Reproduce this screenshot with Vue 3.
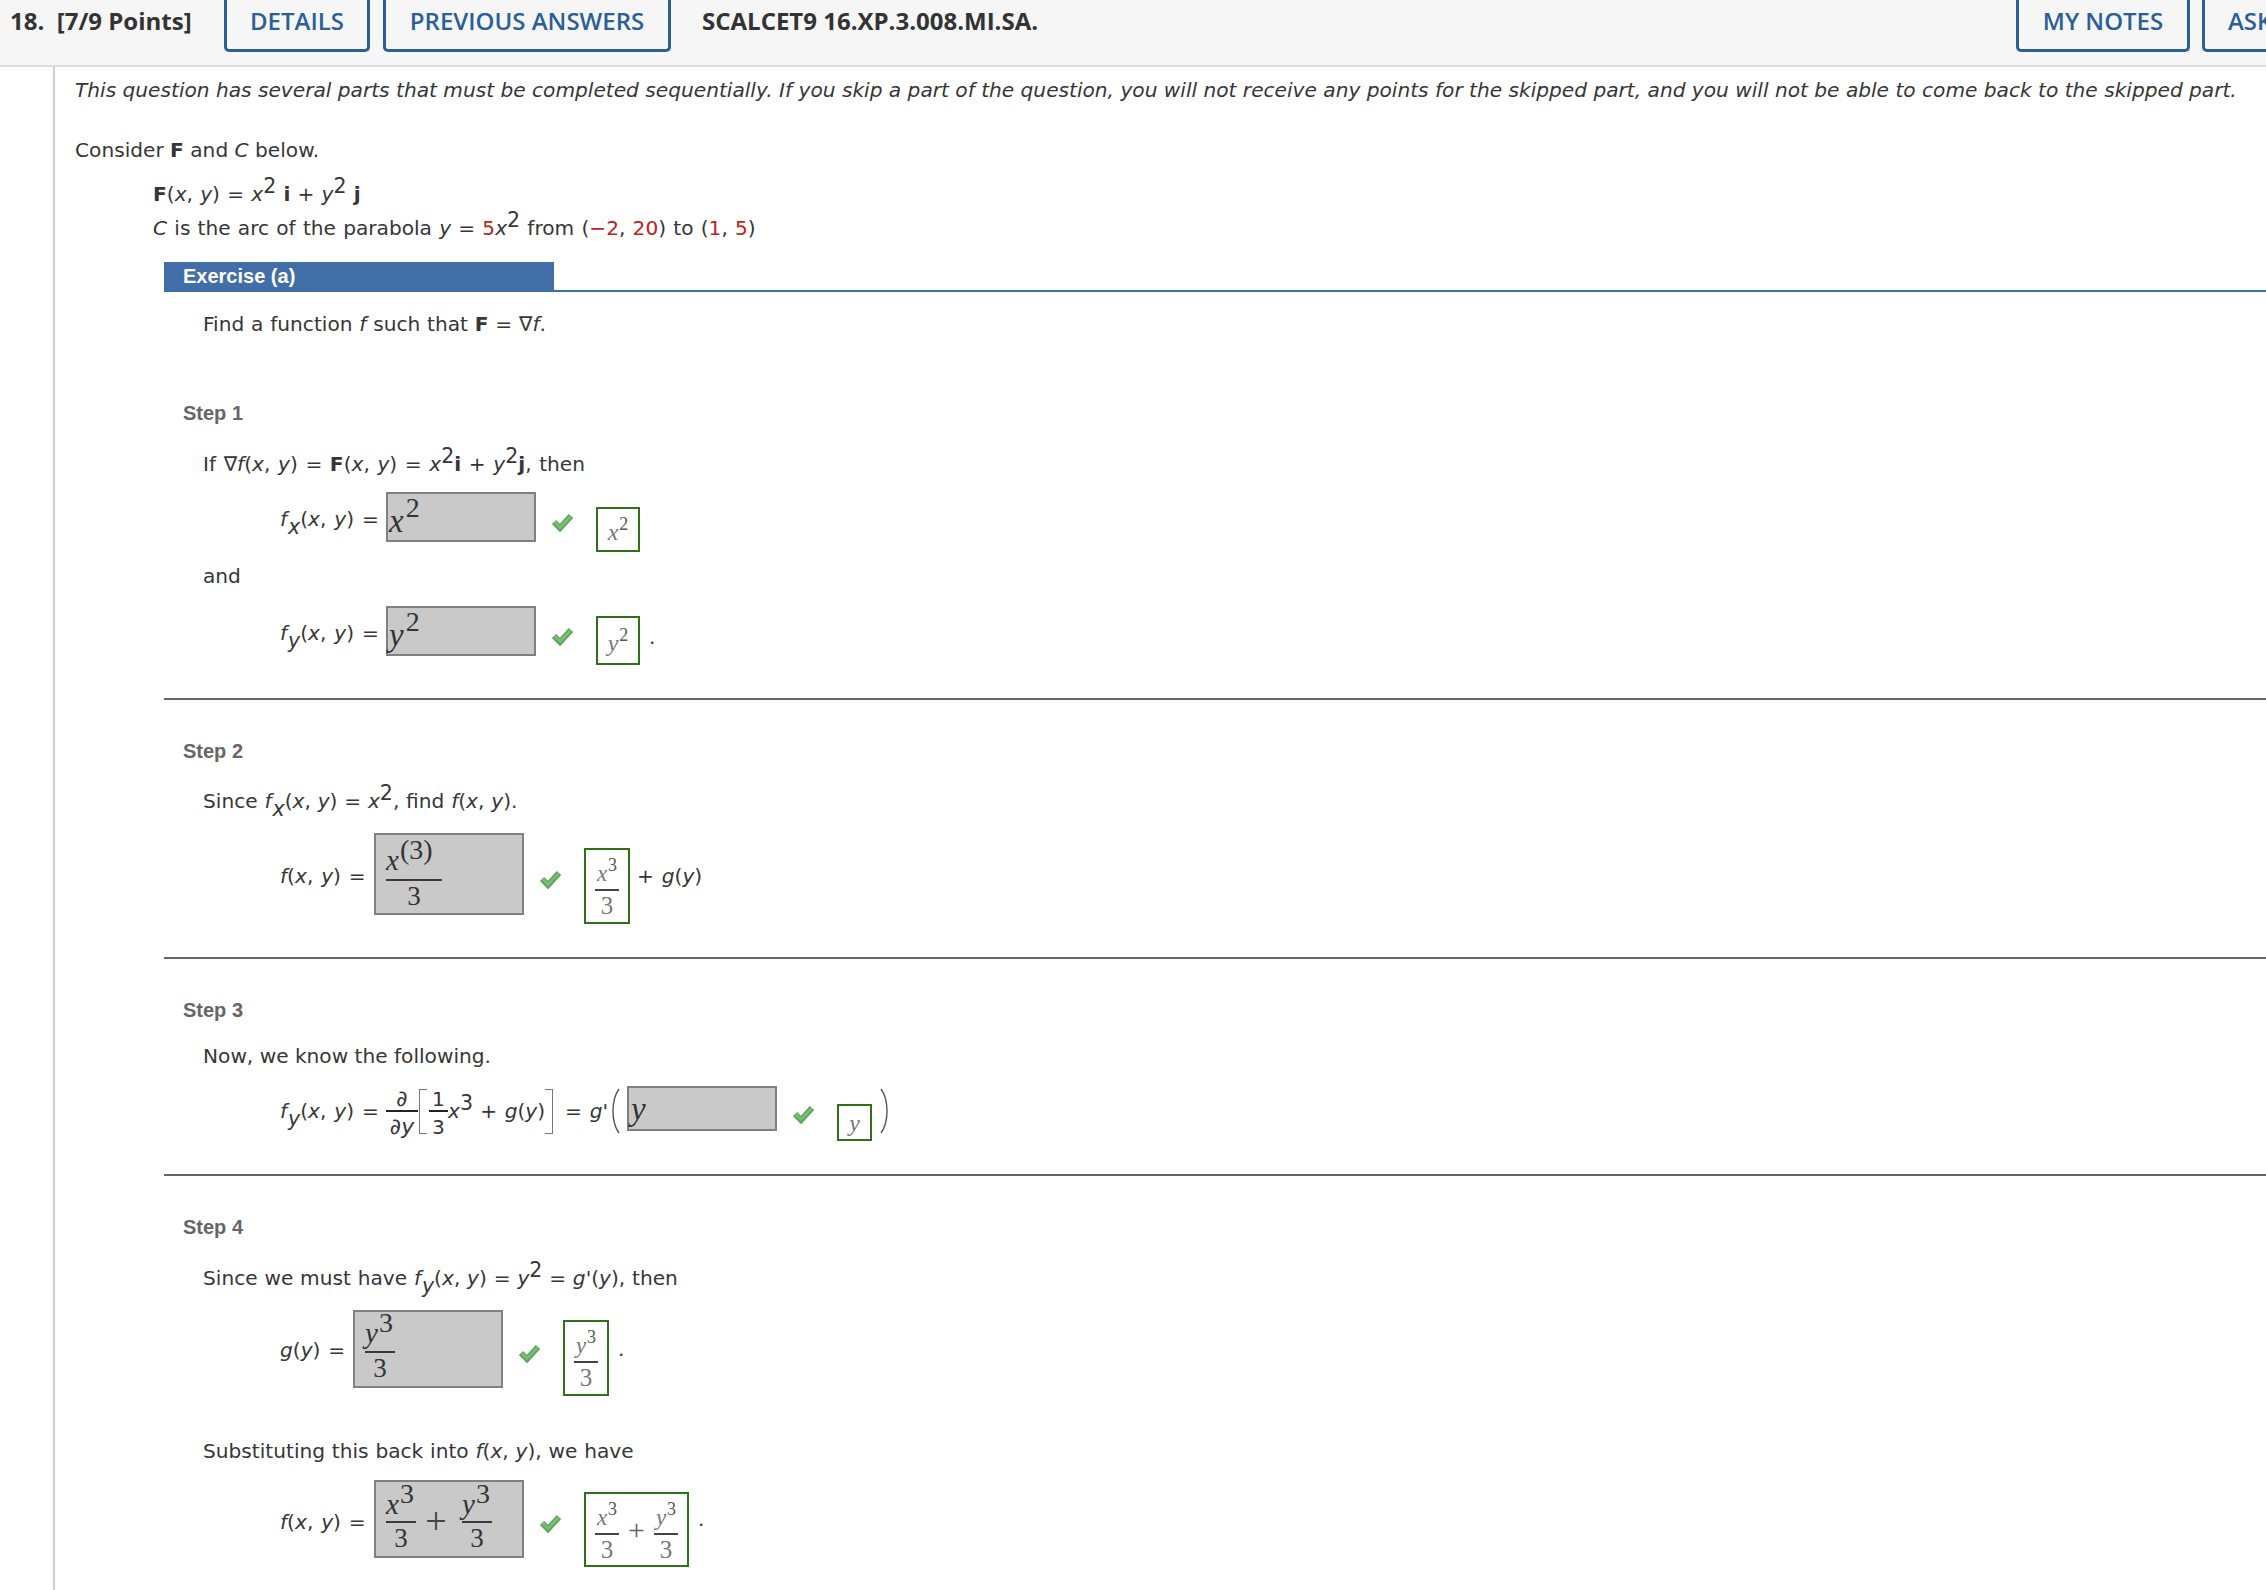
<script setup>
</script>

<template>
  <div class="page">
    <header class="top">
      <div class="points">18.&nbsp; [7/9 Points]</div>
      <a class="tab t-details">DETAILS</a>
      <a class="tab t-prev">PREVIOUS ANSWERS</a>
      <div class="code">SCALCET9 16.XP.3.008.MI.SA.</div>
      <a class="tab t-notes">MY NOTES</a>
      <a class="tab t-ask">ASK YOUR TEACHER</a>
    </header>

    <main class="body">
      <p class="line intro">This question has several parts that must be completed sequentially. If you skip a part of the question, you will not receive any points for the skipped part, and you will not be able to come back to the skipped part.</p>
      <p class="line consider">Consider <b>F</b> and <i>C</i> below.</p>
      <div class="defs">
        <p class="line def1 msd"><b>F</b>(<i>x</i>, <i>y</i>) = <i>x</i><span class="sup">2</span> <b>i</b> + <i>y</i><span class="sup">2</span> <b>j</b></p>
        <p class="line def2 msd"><i>C</i> is the arc of the parabola <i>y</i> = <span class="red">5</span><i>x</i><span class="sup">2</span> from (<span class="red">−2</span>, <span class="red">20</span>) to (<span class="red">1</span>, <span class="red">5</span>)</p>
      </div>

      <div class="exercise"><div class="ex-tag">Exercise (a)</div></div>

      <section class="part">
        <p class="line txt find ms">Find a function <i>f</i> such that <b>F</b> = ∇<i>f</i>.</p>

        <h3 class="step st1">Step 1</h3>
        <p class="line txt if1 msw">If ∇<i>f</i>(<i>x</i>, <i>y</i>) = <b>F</b>(<i>x</i>, <i>y</i>) = <i>x</i><span class="sup">2</span><b>i</b> + <i>y</i><span class="sup">2</span><b>j</b>, then</p>
        <div class="row r1">
          <div class="lab l106"><i>f</i><span class="sub">x</span>(<i>x</i>, <i>y</i>) =</div>
          <div class="box b150"><span class="m"><i>x</i><span class="bsup">2</span></span></div>
          <svg class="chk" viewBox="0 0 23 20"><path class="c1" d="M3 10l6 6L20 4" /><path class="c2" d="M3.6 10l5.4 5.4L19.4 4.6" /></svg>
          <div class="ans w44"><span class="am"><i>x</i><span class="as">2</span></span></div>
        </div>
        <p class="line txt and">and</p>
        <div class="row r2">
          <div class="lab l106"><i>f</i><span class="sub">y</span>(<i>x</i>, <i>y</i>) =</div>
          <div class="box b150"><span class="m"><i>y</i><span class="bsup">2</span></span></div>
          <svg class="chk" viewBox="0 0 23 20"><path class="c1" d="M3 10l6 6L20 4" /><path class="c2" d="M3.6 10l5.4 5.4L19.4 4.6" /></svg>
          <div class="ans w44"><span class="am"><i>y</i><span class="as">2</span></span></div>
          <div class="dot">.</div>
        </div>
        <div class="rule rule1"></div>

        <h3 class="step st2">Step 2</h3>
        <p class="line txt after-step ms">Since <i>f</i><span class="sub">x</span>(<i>x</i>, <i>y</i>) = <i>x</i><span class="sup">2</span>, find <i>f</i>(<i>x</i>, <i>y</i>).</p>
        <div class="row r3">
          <div class="lab l94"><i>f</i>(<i>x</i>, <i>y</i>) =</div>
          <div class="box b150 pad10">
            <div class="fr fr-box">
              <div class="n n2"><i>x</i><span class="fsup">(3)</span></div>
              <div class="d">3</div>
            </div>
          </div>
          <svg class="chk" viewBox="0 0 23 20"><path class="c1" d="M3 10l6 6L20 4" /><path class="c2" d="M3.6 10l5.4 5.4L19.4 4.6" /></svg>
          <div class="ans w46">
            <div class="fr fr-ans">
              <div class="n"><i>x</i><span class="as">3</span></div>
              <div class="d">3</div>
            </div>
          </div>
          <div class="lab tail">+ <i>g</i>(<i>y</i>)</div>
        </div>
        <div class="rule rule2"></div>

        <h3 class="step st3">Step 3</h3>
        <p class="line txt now">Now, we know the following.</p>
        <div class="row r4">
          <div class="lab l106"><i>f</i><span class="sub">y</span>(<i>x</i>, <i>y</i>) =</div>
          <div class="sf partial">
            <div class="n"><i>∂</i></div>
            <div class="d"><i>∂y</i></div>
          </div>
          <div class="brk brk-l"></div>
          <div class="sf third">
            <div class="n">1</div>
            <div class="d">3</div>
          </div>
          <div class="lab mid"><i>x</i><span class="sup">3</span> + <i>g</i>(<i>y</i>)</div>
          <div class="brk brk-r"></div>
          <div class="lab gp">= <i>g</i>'</div>
          <svg class="paren" viewBox="0 0 12 46"><path d="M11 1C3 12 3 34 11 45" /></svg>
          <div class="box b150 short"><span class="m"><i>y</i></span></div>
          <svg class="chk" viewBox="0 0 23 20"><path class="c1" d="M3 10l6 6L20 4" /><path class="c2" d="M3.6 10l5.4 5.4L19.4 4.6" /></svg>
          <div class="ans w35"><span class="am"><i>y</i></span></div>
          <svg class="paren paren-r" viewBox="0 0 12 46"><path d="M1 1C9 12 9 34 1 45" /></svg>
        </div>
        <div class="rule rule3"></div>

        <h3 class="step st4">Step 4</h3>
        <p class="line txt since4 ms">Since we must have <i>f</i><span class="sub">y</span>(<i>x</i>, <i>y</i>) = <i>y</i><span class="sup">2</span> = <i>g</i>'(<i>y</i>), then</p>
        <div class="row r5">
          <div class="lab l73"><i>g</i>(<i>y</i>) =</div>
          <div class="box b150 pad10">
            <div class="fr fr-box fr-y">
              <div class="n n3"><i>y</i><span class="fsup">3</span></div>
              <div class="d">3</div>
            </div>
          </div>
          <svg class="chk" viewBox="0 0 23 20"><path class="c1" d="M3 10l6 6L20 4" /><path class="c2" d="M3.6 10l5.4 5.4L19.4 4.6" /></svg>
          <div class="ans w46">
            <div class="fr fr-ans">
              <div class="n"><i>y</i><span class="as">3</span></div>
              <div class="d">3</div>
            </div>
          </div>
          <div class="dot">.</div>
        </div>

        <p class="line txt subst ms">Substituting this back into <i>f</i>(<i>x</i>, <i>y</i>), we have</p>
        <div class="row r6">
          <div class="lab l94"><i>f</i>(<i>x</i>, <i>y</i>) =</div>
          <div class="box b150 pad10">
            <div class="fr fr-box fr-y">
              <div class="n n4"><i>x</i><span class="fsup">3</span></div>
              <div class="d">3</div>
            </div>
            <div class="plus">+</div>
            <div class="fr fr-box fr-y">
              <div class="n n4"><i>y</i><span class="fsup">3</span></div>
              <div class="d">3</div>
            </div>
          </div>
          <svg class="chk" viewBox="0 0 23 20"><path class="c1" d="M3 10l6 6L20 4" /><path class="c2" d="M3.6 10l5.4 5.4L19.4 4.6" /></svg>
          <div class="ans w105">
            <div class="fr fr-ans">
              <div class="n"><i>x</i><span class="as">3</span></div>
              <div class="d">3</div>
            </div>
            <div class="aplus">+</div>
            <div class="fr fr-ans">
              <div class="n"><i>y</i><span class="as">3</span></div>
              <div class="d">3</div>
            </div>
          </div>
          <div class="dot">.</div>
        </div>
      </section>
    </main>
  </div>
</template>

<style scoped>
* { box-sizing: border-box; }
.page {
  width: 2266px;
  height: 1590px;
  overflow: hidden;
  background: #fff;
  color: #363636;
  font-family: "DejaVu Sans", Verdana, sans-serif;
  font-size: 20.15px;
}
.top {
  display: flex;
  align-items: flex-start;
  height: 67px;
  background: #f6f6f6;
  border-bottom: 2px solid #dedede;
  font-family: "Open Sans", sans-serif;
  font-weight: 600;
  font-size: 24px;
  white-space: nowrap;
}
.points { flex: none; width: 224px; padding: 4px 0 0 10px; color: #333; font-weight: 700; }
.tab {
  flex: none;
  height: 52px;
  padding-top: 4px;
  border: 3px solid #2a6096;
  border-top: 0;
  border-radius: 0 0 5px 5px;
  color: #2a6096;
  text-align: center;
}
.t-details { width: 146px; }
.t-prev { width: 288px; margin-left: 13px; }
.code { flex: none; width: 1345px; padding: 4px 0 0 31px; color: #333; font-weight: 700; }
.t-notes { width: 174px; }
.t-ask { width: 300px; margin-left: 12px; text-align: left; padding-left: 23px; }

.body {
  margin-left: 53px;
  padding-left: 20px;
  height: 1523px;
  border-left: 2px solid #cfcfcf;
}
p { margin: 0; }
.line { line-height: 30px; white-space: nowrap; }
.ms { word-spacing: 0.4px; }
.msd { word-spacing: 0.8px; }
.msw { word-spacing: 1.2px; }
.intro { padding-top: 8px; height: 38px; font-style: italic; }
.consider { margin-top: 30px; }
.defs { margin-left: 78px; }
.def1 { margin-top: 14px; }
.def2 { margin-top: 4px; }
.red { color: #c4201a; }
b { font-weight: 700; }
.sup, .sub { line-height: 0; }
.sup { font-size: 20.5px; vertical-align: 8px; }
.sub { font-style: italic; vertical-align: -8px; font-size: 20.5px; margin-left: 1px; }

.exercise {
  margin: 19px 0 0 89px;
  height: 30px;
  border-bottom: 2px solid #416ea6;
}
.ex-tag {
  width: 390px;
  height: 30px;
  padding-left: 19px;
  background: #416ea6;
  color: #fff;
  font: 700 20px/28px "Liberation Sans", Arial, sans-serif;
}
.part { margin-left: 89px; }
.txt { padding-left: 39px; }
.find { margin-top: 17px; }
.step {
  margin: 0;
  padding-left: 19px;
  height: 24px;
  font: 700 20px/24px "Liberation Sans", Arial, sans-serif;
  color: #666;
}
.st1 { margin-top: 62px; }
.st2, .st3, .st4 { margin-top: 39px; }
.if1 { margin-top: 24px; }
.after-step { margin-top: 23px; }
.now { margin-top: 19px; }
.since4 { margin-top: 24px; }
.and { margin-top: 9px; }
.subst { margin-top: 39px; }
.rule { height: 2px; background: #666; }
.rule1 { margin-top: 33px; }
.rule2 { margin-top: 33px; }
.rule3 { margin-top: 33px; }

.row { display: flex; align-items: flex-start; padding-left: 116px; }
.lab { flex: none; line-height: 30px; white-space: nowrap; word-spacing: 1.5px; }
.l106 { width: 106px; }
.l94 { width: 94px; }
.l73 { width: 73px; }
.box {
  flex: none;
  display: flex;
  align-items: flex-start;
  background: #c9c9c9;
  border: 2px solid #808080;
  color: #333;
  font-family: "Liberation Serif", "Times New Roman", serif;
  font-size: 33px;
}
.b150 { width: 150px; }
.pad10 { padding-left: 10px; }
.m { display: block; height: 46px; line-height: 54px; padding-left: 1px; }
.bsup { font-size: 28px; line-height: 0; vertical-align: 15px; margin-left: 2px; }
.fsup { font-size: 28px; line-height: 0; vertical-align: 11px; font-style: normal; margin-left: 1px; }
.chk { flex: none; width: 23px; height: 20px; margin-left: 15px; }
.chk path { fill: none; stroke-linejoin: miter; }
.chk .c1 { stroke: #5fa55e; stroke-width: 6; }
.chk .c2 { stroke: #7dbd79; stroke-width: 2.5; }
.ans {
  flex: none;
  display: flex;
  justify-content: center;
  align-items: center;
  margin-left: 22px;
  border: 2px solid #2f7018;
  font-family: "Liberation Serif", "Times New Roman", serif;
  font-size: 24px;
  color: #777;
}
.w44 { width: 44px; }
.w46 { width: 46px; }
.w35 { width: 35px; }
.w105 { width: 105px; }
.am { display: block; padding-top: 5px; line-height: 30px; }
.as { font-size: 18px; line-height: 0; vertical-align: 10px; font-style: normal; color: #555; margin-left: 1px; }
.dot { flex: none; line-height: 30px; margin-left: 9px; }

.r1 { margin-top: 13px; height: 60px; }
.r1 .lab { margin-top: 12px; }
.r1 .box { height: 50px; }
.r1 .chk { margin-top: 20px; }
.r1 .ans { margin-top: 15px; height: 45px; }
.r2 { margin-top: 15px; height: 59px; }
.r2 .lab { margin-top: 12px; }
.r2 .box { height: 50px; }
.r2 .chk { margin-top: 20px; }
.r2 .ans { margin-top: 10px; height: 49px; }
.r2 .dot { margin-top: 16px; }

.fr { display: flex; flex-direction: column; align-items: stretch; text-align: center; flex: none; font-size: 29px; }
.fr .n { border-bottom: 2px solid #3a3a3a; }
.fr-box .n { height: 41px; line-height: 42px; white-space: nowrap; text-align: left; }
.fr-box .d { height: 30px; line-height: 30px; font-size: 27px; }
.fr-box .n2 { height: 46px; line-height: 51px; width: 56px; }
.fr-y { width: 30px; }
.n4 { line-height: 44px !important; }
.fr-ans { width: 24px; font-size: 23px; }
.fr-ans .n { height: 40px; line-height: 45px; border-bottom-color: #444; white-space: nowrap; }
.fr-ans .d { height: 30px; line-height: 30px; font-size: 25px; }
.plus { width: 46px; text-align: center; line-height: 78px; padding-right: 6px; color: #444; font-size: 38px; }
.aplus { width: 35px; text-align: center; font-size: 30px; color: #666; }

.r3 { margin-top: 17px; height: 91px; }
.r3 .lab { margin-top: 28px; }
.r3 .box { height: 82px; }
.r3 .chk { margin-top: 36px; }
.r3 .ans { margin-top: 15px; height: 76px; }
.tail { margin-left: 7px; }

.r4 { margin-top: 15px; height: 55px; }
.r4 .lab { margin-top: 10px; }
.sf { flex: none; display: flex; flex-direction: column; text-align: center; margin-top: -2px; line-height: 30px; }
.sf .n { height: 28px; border-bottom: 2px solid #222; }
.sf .d { height: 30px; }
.partial { width: 32px; font-size: 22px; }
.third { width: 19px; margin-left: 2px; }
.brk { flex: none; width: 8px; height: 45px; margin-top: 3px; border: 1.5px solid #777; }
.brk-l { margin-left: 1px; border-right: 0; }
.brk-r { border-left: 0; }
.r4 .mid { width: 97px; word-spacing: 1px; }
.r4 .gp { margin-left: 12px; width: 45px; }
.paren { flex: none; width: 12px; height: 46px; margin: 2px 0 0 -2px; }
.paren path { fill: none; stroke: #555; stroke-width: 1.4; }
.r4 .box { height: 45px; margin-left: 7px; }
.r4 .m { height: 30px; line-height: 30px; margin-top: 6px; padding-left: 2px; }
.r4 .chk { margin-top: 18px; }
.r4 .ans { margin-top: 18px; height: 37px; }
.r4 .am { padding-top: 0; }
.paren-r { margin: 2px 0 0 8px; }

.r5 { margin-top: 17px; height: 87px; }
.r5 .lab { margin-top: 25px; }
.r5 .box { height: 78px; }
.r5 .chk { margin-top: 33px; }
.r5 .ans { margin-top: 10px; height: 76px; }
.r5 .dot { margin-top: 24px; }

.r6 { margin-top: 14px; height: 87px; }
.r6 .lab { margin-top: 27px; }
.r6 .box { height: 78px; }
.r6 .chk { margin-top: 33px; }
.r6 .ans { margin-top: 12px; height: 75px; }
.r6 .dot { margin-top: 24px; }
</style>

<style>
html, body { margin: 0; background: #fff; }
</style>
